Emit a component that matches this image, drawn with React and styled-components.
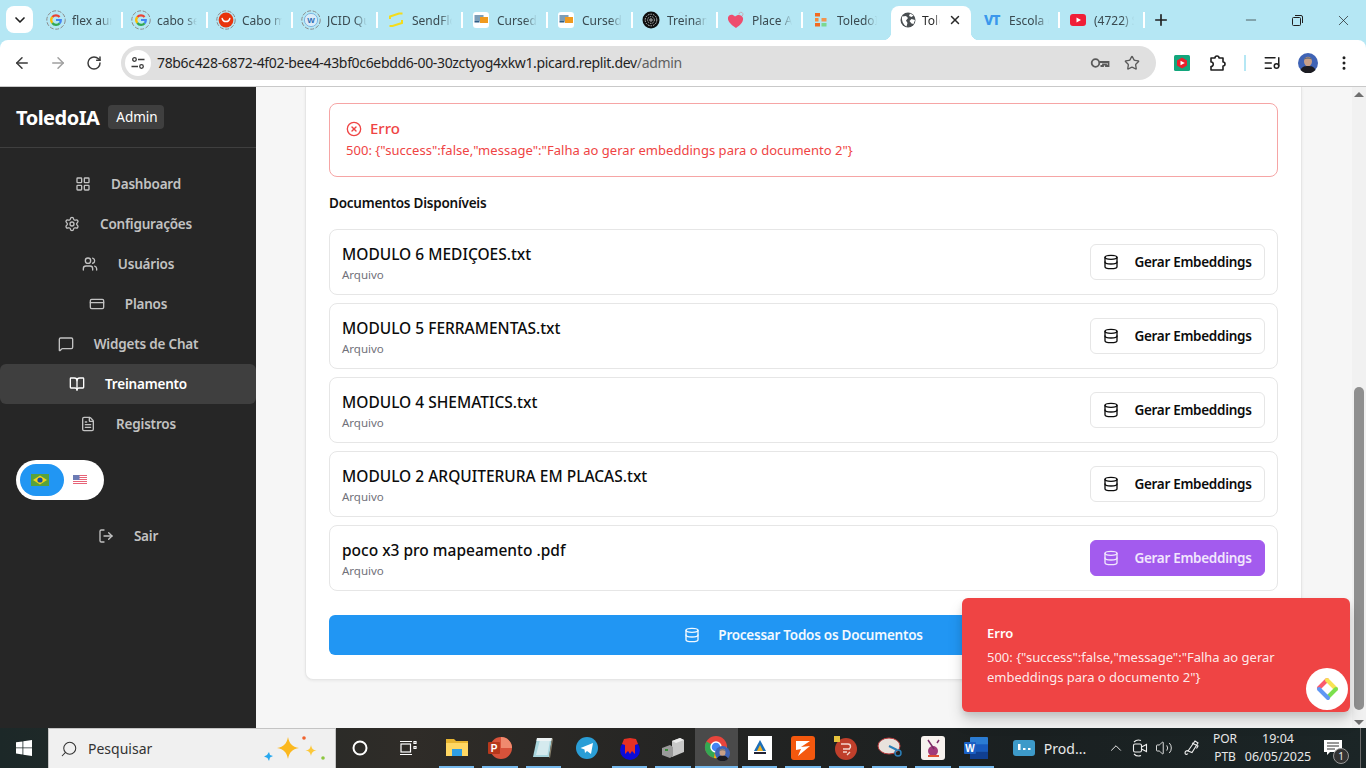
import styled, { createGlobalStyle } from 'styled-components'
import {
  ArrowLeft, ArrowRight, BookOpen, ChevronDown, ChevronUp, CircleX, CreditCard, Database, EllipsisVertical,
  FileText, LayoutGrid, ListMusic, LogOut, MessageSquare, Minus, Plus, RotateCw, Search, Settings, Star,
  Users, Volume2, X
} from 'lucide-react'

const UI_FONT = '"Noto Sans", "Open Sans", sans-serif'

const ERROR_TEXT = '500: {"success":false,"message":"Falha ao gerar embeddings para o documento 2"}'

const GlobalStyle = createGlobalStyle`
  html, body {
    margin: 0;
    height: 100%;
    overflow: hidden;
  }
  #root {
    height: 100vh;
  }
  * {
    box-sizing: border-box;
  }
`

const Screen = styled.div`
  display: flex;
  flex-direction: column;
  height: 768px;
  font-family: ${UI_FONT};
  background: #b5e7f4;
`

/* browser tabs */
const TabStrip = styled.div`
  display: flex;
  align-items: flex-end;
  height: 40px;
  flex: none;
`

const TabMenu = styled.div`
  display: flex;
  align-items: center;
  justify-content: center;
  width: 27px;
  height: 27px;
  margin: 0 5px 7px 6px;
  border-radius: 8px;
  background: #fff;
  color: #1f1f1f;
`

const Tab = styled.div`
  position: relative;
  display: flex;
  align-items: center;
  gap: 6px;
  width: 85px;
  height: 40px;
  padding-left: 8px;
  font-size: 12px;
  color: #3a4a50;

  &::after {
    content: '';
    display: ${p => (p.$nosep ? 'none' : 'block')};
    position: absolute;
    right: 0;
    top: 12px;
    width: 2px;
    height: 16px;
    background: #fff;
  }
`

const ActiveTab = styled.div`
  position: relative;
  display: flex;
  align-items: center;
  gap: 6px;
  width: 80px;
  height: 34px;
  margin: 0 4px 0 3px;
  padding: 0 9px 6px;
  background: #fff;
  border-radius: 8px 8px 0 0;
  font-size: 12px;
  color: #2a2a2a;

  &::before, &::after {
    content: '';
    position: absolute;
    bottom: 0;
    width: 8px;
    height: 8px;
  }
  &::before {
    left: -8px;
    background: radial-gradient(circle at 0 0, transparent 8px, #fff 8.5px);
  }
  &::after {
    right: -8px;
    background: radial-gradient(circle at 100% 0, transparent 8px, #fff 8.5px);
  }
`

const TabClose = styled(X)`
  margin-left: auto;
`

const TabLabel = styled.span`
  width: ${p => p.$width || 40}px;
  overflow: hidden;
  white-space: nowrap;
  -webkit-mask-image: linear-gradient(90deg, #000 70%, transparent);
  mask-image: linear-gradient(90deg, #000 70%, transparent);
`

const NewTab = styled.div`
  display: flex;
  align-items: center;
  justify-content: center;
  width: 28px;
  height: 40px;
  margin-left: 2px;
  color: #1f1f1f;
`

const WindowButtons = styled.div`
  display: flex;
  margin-left: auto;
  height: 40px;
`

const WindowButton = styled.div`
  display: flex;
  align-items: center;
  justify-content: center;
  width: 46px;
  color: #1f1f1f;
`

const VtMark = styled.span`
  width: 20px;
  padding-left: 1px;
  font-size: 14px;
  line-height: 14px;
  font-weight: 800;
  letter-spacing: -1.2px;
  color: #3a97ec;
`

/* address bar */
const Toolbar = styled.div`
  display: flex;
  align-items: flex-start;
  flex: none;
  height: 47px;
  padding: 6px 4px 0;
  background: #fff;
  border-radius: 8px 8px 0 0;
  border-bottom: 1px solid #c9c9c9;
`

const ToolButton = styled.div`
  display: flex;
  align-items: center;
  justify-content: center;
  flex: none;
  width: 36px;
  height: 34px;
  color: ${p => (p.$muted ? '#a0a0a0' : '#3b3b3b')};
`

const Omnibox = styled.div`
  display: flex;
  align-items: center;
  flex: 1;
  height: 34px;
  margin: 0 8px 0 9px;
  padding: 0 16px 0 4px;
  border-radius: 17px;
  background: #e0e0e0;
`

const SiteChip = styled.div`
  display: flex;
  align-items: center;
  justify-content: center;
  width: 26px;
  height: 26px;
  border-radius: 50%;
  background: #fff;
`

const Url = styled.div`
  flex: 1;
  margin-left: 6px;
  padding-bottom: 1px;
  font-size: 14px;
  letter-spacing: -0.34px;
  color: #1f1f1f;
  white-space: nowrap;

  span {
    color: #5f5f5f;
  }
`

const OmniIcons = styled.div`
  display: flex;
  align-items: center;
  gap: 14px;
  color: #5a5a5a;
`

const ToolDivider = styled.div`
  flex: none;
  width: 2px;
  height: 16px;
  margin: 9px 8px 0;
  background: #b5e7f4;
`

/* page area */
const Viewport = styled.div`
  position: relative;
  display: flex;
  flex: 1;
  min-height: 0;
  background: #f6f6f6;
`

const Sidebar = styled.aside`
  flex: none;
  width: 256px;
  background: #262626;
`

const SidebarHeader = styled.div`
  display: flex;
  align-items: center;
  gap: 9px;
  height: 61px;
  padding: 0 16px;
  border-bottom: 1px solid #3f3f3f;
`

const Brand = styled.div`
  font-size: 20px;
  font-weight: 700;
  letter-spacing: -0.5px;
  color: #fff;
`

const Badge = styled.div`
  display: flex;
  align-items: center;
  height: 24px;
  padding: 0 6px 0 8px;
  border-radius: 4px;
  background: #3f3f3f;
  font-size: 13.5px;
  color: #fff;
`

const Nav = styled.nav`
  display: flex;
  flex-direction: column;
  padding-top: 16px;
`

const NavItem = styled.div`
  display: flex;
  align-items: center;
  justify-content: center;
  gap: 20px;
  height: 40px;
  border-radius: 6px;
  font-size: 13.5px;
  font-weight: 600;
  letter-spacing: -0.2px;
  color: ${p => (p.$active ? '#fff' : '#c2c2c2')};
  background: ${p => (p.$active ? '#3f3f3f' : 'transparent')};
`

const LangToggle = styled.div`
  display: flex;
  align-items: center;
  width: 88px;
  height: 40px;
  margin: 16px 0 16px 16px;
  padding: 4px;
  border-radius: 20px;
  background: #fff;
`

const LangKnob = styled.div`
  display: flex;
  align-items: center;
  justify-content: center;
  width: 44px;
  height: 32px;
  padding-right: 4px;
  border-radius: 16px;
  background: #2196f3;
`

const LangOff = styled.div`
  display: flex;
  justify-content: center;
  width: 32px;
  opacity: 0.75;
`

const Main = styled.main`
  flex: 1;
  min-width: 0;
  overflow: hidden;
  padding-left: 49px;
`

const Card = styled.section`
  width: 997px;
  padding: 16px 23px 24px;
  background: #fff;
  border: 1px solid #e6e6e6;
  border-top: 0;
  border-radius: 0 0 8px 8px;
  box-shadow: 0 1px 3px rgba(0, 0, 0, 0.06);
`

const Alert = styled.div`
  padding: 14px 16px 16px;
  border: 1px solid #f6a5a5;
  border-radius: 8px;
  color: #ef4444;
`

const AlertTitle = styled.div`
  display: flex;
  align-items: center;
  gap: 8px;
  height: 22px;
  font-size: 15px;
  line-height: 20px;
  font-weight: 500;

  span {
    margin-bottom: 2px;
  }
`

const AlertText = styled.div`
  font-size: 13px;
  line-height: 20px;
  letter-spacing: 0.03px;
`

const SectionTitle = styled.h3`
  margin: 16px 0;
  font-size: 13.5px;
  line-height: 20px;
  font-weight: 600;
  letter-spacing: -0.23px;
  color: #111;
`

const DocList = styled.div`
  display: flex;
  flex-direction: column;
  gap: 8px;
`

const DocRow = styled.div`
  display: flex;
  align-items: center;
  justify-content: space-between;
  padding: 12px 12px 11px;
  border: 1px solid #e6e6e6;
  border-radius: 8px;
`

const DocName = styled.div`
  font-size: 15.5px;
  line-height: 24px;
  font-weight: 500;
  color: #0c0c0c;
`

const DocType = styled.div`
  margin-top: 1px;
  font-size: 11.5px;
  line-height: 16px;
  color: #71717a;
`

const EmbedButton = styled.div`
  display: flex;
  align-items: center;
  justify-content: center;
  gap: 15px;
  width: 175px;
  height: 36px;
  margin-bottom: 1px;
  border: 1px solid ${p => (p.$hover ? '#a35bee' : '#e6e6e6')};
  border-radius: 6px;
  background: ${p => (p.$hover ? '#a35bee' : '#fff')};
  color: ${p => (p.$hover ? '#f1e6fd' : '#0c0c0c')};
  font-size: 13.5px;
  font-weight: 600;
  letter-spacing: -0.3px;
`

const ProcessButton = styled.div`
  display: flex;
  align-items: center;
  justify-content: center;
  gap: 18px;
  height: 40px;
  margin-top: 24px;
  border-radius: 6px;
  background: #2196f3;
  color: #f2f9ff;
  font-size: 13.5px;
  font-weight: 600;
  letter-spacing: -0.25px;
`

/* scrollbar */
const ScrollTrack = styled.div`
  display: flex;
  flex-direction: column;
  align-items: center;
  flex: none;
  width: 14px;
  background: #f1f1f1;
`

const ScrollArrow = styled.div`
  flex: none;
  width: 0;
  height: 0;
  margin-top: 5px;
  border-left: 5px solid transparent;
  border-right: 5px solid transparent;
  ${p => (p.$down ? 'border-top: 5px solid #6f6f6f;' : 'border-bottom: 5px solid #6f6f6f;')}
`

const ScrollThumb = styled.div`
  flex: none;
  width: 10px;
  height: 323px;
  margin-top: 290px;
  margin-bottom: 5px;
  border-radius: 5px;
  background: #8f8f8f;
`

/* overlays */
const Toast = styled.div`
  position: absolute;
  right: 16px;
  bottom: 16px;
  width: 388px;
  height: 114px;
  padding: 25px;
  border-radius: 6px;
  background: #ef4444;
  color: #fff;
  box-shadow: 0 10px 15px rgba(0, 0, 0, 0.14), 0 4px 6px rgba(0, 0, 0, 0.1);
`

const ToastTitle = styled.div`
  font-size: 13px;
  line-height: 20px;
  font-weight: 600;
`

const ToastText = styled.div`
  margin-top: 4px;
  font-size: 13px;
  line-height: 20px;
  color: rgba(255, 255, 255, 0.9);
`

const HelpBubble = styled.div`
  position: absolute;
  right: 18px;
  bottom: 18px;
  display: flex;
  align-items: center;
  justify-content: center;
  width: 42px;
  height: 42px;
  border-radius: 50%;
  background: #fff;
`

/* windows taskbar */
const Taskbar = styled.footer`
  display: flex;
  align-items: stretch;
  flex: none;
  height: 40px;
  background: linear-gradient(90deg, #1c2828, #2f2c28 30%, #222322 55%, #1a2021 75%, #1b2526);
  color: #f0f0f0;
`

const StartButton = styled.div`
  display: flex;
  align-items: center;
  justify-content: center;
  width: 48px;
`

const SearchBox = styled.div`
  display: flex;
  align-items: center;
  width: 288px;
  padding: 0 9px 0 11px;
  background: #f0f0f0;
  border: 1px solid #c4c4c4;
  border-bottom: 0;
  color: #333;
  font-size: 14px;
`

const SearchGlass = styled(Search)`
  transform: scaleX(-1);
`

const SearchText = styled.span`
  flex: 1;
  margin-left: 10px;
`

const TaskButton = styled.div`
  display: flex;
  align-items: center;
  justify-content: center;
  width: ${p => p.$width}px;
`

const TaskApps = styled.div`
  display: flex;
  margin-left: 3px;
`

const TaskApp = styled.div`
  position: relative;
  display: flex;
  align-items: center;
  justify-content: center;
  width: 43.3px;
  background: ${p => (p.$active ? '#4a4a4a' : 'transparent')};

  &::after {
    content: '';
    display: ${p => (p.$open ? 'block' : 'none')};
    position: absolute;
    left: ${p => (p.$active ? 0 : 4)}px;
    right: ${p => (p.$active ? 0 : 4)}px;
    bottom: 0;
    height: 2px;
    background: #76b9ed;
  }
`

const TaskLabelled = styled.div`
  display: flex;
  align-items: center;
  gap: 9px;
  width: 106px;
  padding-left: 15px;
  font-size: 14px;
  color: #e8e8e8;
`

const Tray = styled.div`
  display: flex;
  align-items: stretch;
  margin-left: auto;
`

const TrayIcon = styled.div`
  display: flex;
  align-items: center;
  justify-content: center;
  width: ${p => p.$width || 24}px;
`

const TrayText = styled.div`
  display: flex;
  flex-direction: column;
  align-items: center;
  justify-content: center;
  width: ${p => p.$width}px;
  font-size: ${p => p.$size || 12}px;
  line-height: 18px;
  color: #e8e8e8;
  white-space: nowrap;
`

const NotifyButton = styled.div`
  position: relative;
  display: flex;
  align-items: center;
  justify-content: center;
  width: 38px;
`

const NotifyCount = styled.span`
  position: absolute;
  right: 3px;
  bottom: 4px;
  display: flex;
  align-items: center;
  justify-content: center;
  width: 16px;
  height: 16px;
  border-radius: 50%;
  background: #333;
  border: 1px solid #999;
  font-size: 10px;
  color: #eee;
`

const ShowDesktop = styled.div`
  width: 14px;
  background: linear-gradient(90deg, transparent 8px, #6a6a6a 8px, #6a6a6a 9px, transparent 9px);
`

const SparkleSvg = styled.svg`
  margin-top: 4px;
`

const Ring = () => <circle cx="10" cy="10" r="9.2" fill="none" stroke="#8b8b8b" strokeWidth="1" strokeDasharray="4 1.6" />

const GoogleIcon = () => (
  <svg width="20" height="20" viewBox="0 0 20 20">
    <Ring />
    <g fill="none" strokeWidth="2.2">
      <path d="M13.6 7A4.8 4.8 0 0 0 6.3 7" stroke="#ea4335" />
      <path d="M6.3 7a4.8 4.8 0 0 0 0 6" stroke="#fbbc05" />
      <path d="M6.3 13a4.8 4.8 0 0 0 7.4.3" stroke="#34a853" />
      <path d="M13.7 13.3A4.8 4.8 0 0 0 14.8 10H10" stroke="#4285f4" />
    </g>
  </svg>
)

const AliIcon = () => (
  <svg width="20" height="20" viewBox="0 0 20 20">
    <Ring />
    <circle cx="10" cy="10" r="7.4" fill="#e8340c" />
    <path d="M6.2 8.6a3.9 3.9 0 0 0 7.6 0" fill="none" stroke="#fff" strokeWidth="1.5" strokeLinecap="round" />
  </svg>
)

const JcidIcon = () => (
  <svg width="20" height="20" viewBox="0 0 20 20">
    <Ring />
    <circle cx="10" cy="10" r="6.6" fill="#dcecf8" stroke="#6aa8dc" strokeWidth="0.8" />
    <text x="10" y="12.8" textAnchor="middle" fontSize="8" fontWeight="700" fill="#2d6fb8" fontFamily="Liberation Sans, sans-serif">W</text>
  </svg>
)

const SendIcon = () => (
  <svg width="20" height="20" viewBox="0 0 20 20" fill="none" stroke="#f4dc1c" strokeWidth="2">
    <path d="M4 9V6.5L13 3.5h3.5" />
    <path d="M16 10v3l-9.5 3H3.5" />
  </svg>
)

const CursedIcon = () => (
  <svg width="20" height="20" viewBox="0 0 20 20">
    <rect x="2" y="2" width="16" height="16" rx="3" fill="#fff" />
    <rect x="3.5" y="5" width="9" height="6" fill="#7d9eb8" />
    <rect x="9" y="7" width="8" height="6" fill="#f09a1e" />
    <rect x="3.5" y="11" width="5" height="1.5" fill="#2d5d86" />
  </svg>
)

const TrainIcon = () => (
  <svg width="20" height="20" viewBox="0 0 20 20">
    <circle cx="10" cy="10" r="8.5" fill="#0e0e0e" />
    <g fill="none" stroke="#cfcfcf" strokeWidth="0.9">
      <circle cx="10" cy="10" r="5.8" strokeDasharray="1.6 1" />
      <circle cx="10" cy="10" r="3.4" strokeDasharray="1.4 1" />
      <circle cx="10" cy="10" r="1.2" />
    </g>
  </svg>
)

const HeartIcon = () => (
  <svg width="20" height="20" viewBox="0 0 20 20">
    <path d="M10 18C4 14 1.5 11 2 7.5 2.5 4.5 6.5 3.5 9 6.5c2.5-2.5 7-2 8 1.5.7 3.5-2.5 7-7 10z" fill="#ee4d6e" />
    <path d="M13 4.5a2 2 0 1 1 3 1.5" fill="none" stroke="#c9a3ad" strokeWidth="0.9" />
  </svg>
)

const ToledoIcon = () => (
  <svg width="20" height="20" viewBox="0 0 20 20">
    <rect x="4" y="3" width="5" height="3.5" fill="#f26a21" />
    <rect x="4" y="8" width="3.5" height="3.5" fill="#f58a3c" />
    <rect x="4" y="13" width="5" height="3.5" fill="#f26a21" />
    <rect x="10.5" y="8" width="5" height="3.5" fill="#f2944e" />
    <rect x="10.5" y="13" width="5" height="3.5" fill="#7bd88f" />
  </svg>
)

const GlobeIcon = () => (
  <svg width="16" height="16" viewBox="0 0 16 16">
    <circle cx="8" cy="8" r="7.5" fill="#4a4f52" />
    <path d="M2 4.5 6 4l2 2-2 2.5 1.5 2.5-1 3.5C3.5 13 1.5 9 2 4.5zM10 1.5l3.5 2-2 1.5-2.5-1zM15 8l-3.5-1-2 2 2 2.5L13.5 12z" fill="#fff" />
  </svg>
)

const YoutubeIcon = () => (
  <svg width="20" height="20" viewBox="0 0 20 20">
    <rect x="2" y="4" width="16" height="12" rx="3" fill="#f01f37" />
    <path d="M8.5 7.5 13 10l-4.5 2.5z" fill="#fff" />
  </svg>
)

const TuneIcon = () => (
  <svg width="16" height="16" viewBox="0 0 16 16" fill="none" stroke="#3b3b3b" strokeWidth="1.3">
    <circle cx="4.5" cy="4.5" r="1.8" />
    <path d="M8 4.5h6.5M1.5 11.5H8" />
    <circle cx="11.5" cy="11.5" r="1.8" />
  </svg>
)

const KeyIcon = () => (
  <svg width="20" height="14" viewBox="0 0 20 14" fill="none" stroke="#5a5a5a" strokeWidth="1.8">
    <circle cx="5.5" cy="7" r="3.8" />
    <path d="M9.5 6H18.5V10H16V8.5H13V10H10.5" />
  </svg>
)

const RestoreIcon = () => (
  <svg width="11" height="11" viewBox="0 0 11 11" fill="none" stroke="#1f1f1f">
    <rect x="0.5" y="2.5" width="8" height="8" rx="1" />
    <path d="M3 .5h6a1.5 1.5 0 0 1 1.5 1.5v6" />
  </svg>
)

const ExtensionBadge = () => (
  <svg width="16" height="16" viewBox="0 0 16 16">
    <rect width="16" height="16" rx="1.5" fill="#12a67c" />
    <path d="M8 2.5 13 5.5v5L8 13.5 3 10.5v-5z" fill="#ea1f2d" />
    <path d="M6.5 5.8 10.8 8l-4.3 2.2z" fill="#fff" />
  </svg>
)

const PuzzleIcon = () => (
  <svg width="18" height="18" viewBox="0 0 18 18" fill="none" stroke="#1f1f1f" strokeWidth="1.6" strokeLinejoin="round">
    <path d="M2 4h4a2 2 0 0 1 4 0h4v4a2 2 0 0 1 0 4v4H2v-3.5a2 2 0 0 0 0-4.5z" />
  </svg>
)

const AvatarIcon = ({ size = 20 }) => (
  <svg width={size} height={size} viewBox="0 0 20 20">
    <circle cx="10" cy="10" r="10" fill="#3f63b5" />
    <ellipse cx="10" cy="8.5" rx="4" ry="4.8" fill="#c89f86" />
    <path d="M6 6.5C6.5 3.5 13.5 3.5 14 6.5c-2-1-6-1-8 0z" fill="#6a6a70" />
    <path d="M2.5 17c1.5-3.5 4-4 7.5-4s6 .5 7.5 4A10 10 0 0 1 2.5 17z" fill="#1c1c22" />
  </svg>
)

const BrazilFlag = () => (
  <svg width="18" height="12" viewBox="0 0 18 12">
    <rect width="18" height="12" fill="#58a23c" />
    <path d="M9 1.5 16 6l-7 4.5L2 6z" fill="#f2d51c" />
    <circle cx="9" cy="6" r="2.6" fill="#1d4f9e" />
  </svg>
)

const UsFlag = () => (
  <svg width="14" height="10" viewBox="0 0 14 10">
    <rect width="14" height="10" fill="#fff" />
    <path d="M0 .5h14M0 2.5h14M0 4.5h14M0 6.5h14M0 8.5h14" stroke="#e0304a" />
    <rect width="6.5" height="5" fill="#3c4f9c" />
  </svg>
)

const ReplitMark = () => (
  <svg width="24" height="24" viewBox="0 0 24 24" fill="none" strokeWidth="4" strokeLinecap="round">
    <path d="M12 3 4 11" stroke="#fb5b6c" />
    <path d="M12 3l9 9" stroke="#f7e353" />
    <path d="M21 12l-8 8" stroke="#7be04d" />
    <path d="M13 21l-9-9" stroke="#5f97f4" />
  </svg>
)

const WindowsLogo = () => (
  <svg width="16" height="16" viewBox="0 0 16 16" fill="#fff">
    <path d="M0 2.3 6.5 1.4v6.100H0zM7.3 1.3 16 0v7.500H7.3zM0 8.3h6.500v6.200L0 13.600zM7.3 8.3H16V16l-8.700-1.200z" />
  </svg>
)

const SparkleGroup = () => (
  <SparkleSvg width="62" height="32" viewBox="0 0 62 32">
    <path d="M24 2c1.5 7 4 9.5 11 11-7 1.5-9.5 4-11 11-1.5-7-4-9.5-11-11 7-1.5 9.5-4 11-11z" fill="#fbb81f" />
    <path d="M47 10c.7 3.5 2 5 5.5 5.5C49 16 47.7 17.5 47 21c-.7-3.5-2-5-5.5-5.5 3.5-.5 4.8-2 5.5-5.5z" fill="#fcc83a" />
    <path d="M5 17l1 3 3 1-3 1.500-1 3.500-1.500-3L0 21.500 3 20z" fill="#27a8ef" />
    <circle cx="40" cy="3" r="1.8" fill="#f0622e" />
    <circle cx="59" cy="23" r="1.8" fill="#8cc63f" />
  </SparkleSvg>
)

const CortanaIcon = () => (
  <svg width="16" height="16" viewBox="0 0 16 16">
    <circle cx="8" cy="8" r="6.5" fill="none" stroke="#fff" strokeWidth="2" />
  </svg>
)

const TaskViewIcon = () => (
  <svg width="18" height="18" viewBox="0 0 18 18" fill="none" stroke="#fff" strokeWidth="1.2">
    <rect x="2" y="5" width="9.5" height="8" />
    <path d="M1 2.5h12M1 15.5h12M15 2.5h2v2h-2zM15 7.5h2v2h-2z" />
  </svg>
)

const ExplorerIcon = () => (
  <svg width="22" height="20" viewBox="0 0 22 20">
    <path d="M0 1h8l2 2h12v14H0z" fill="#e7b431" />
    <rect y="5" width="22" height="13" fill="#ffd763" />
    <rect x="6" y="11" width="10" height="7" fill="#2f9ee3" />
  </svg>
)

const PptIcon = () => (
  <svg width="24" height="24" viewBox="0 0 24 24">
    <circle cx="13" cy="12" r="11" fill="#d8523a" />
    <path d="M13 12V1a11 11 0 0 1 11 11z" fill="#f08a6e" />
    <rect x="0" y="6" width="12" height="12" rx="1" fill="#b7381c" />
    <text x="6" y="15.5" textAnchor="middle" fontSize="10" fontWeight="700" fill="#fff" fontFamily="Liberation Sans, sans-serif">P</text>
  </svg>
)

const NotesIcon = () => (
  <svg width="22" height="24" viewBox="0 0 22 24">
    <path d="M5 2h15l-3 19H1z" fill="#a9d6de" />
    <path d="M8 4h10l-2.5 15H4z" fill="#d5eaee" />
    <path d="M5 2h15l-.5 3H4.5z" fill="#eef3f4" />
    <path d="M17 21l3-19 1 1-3 19z" fill="#8b8470" />
  </svg>
)

const TelegramIcon = () => (
  <svg width="22" height="22" viewBox="0 0 22 22">
    <circle cx="11" cy="11" r="11" fill="#2a9ed6" />
    <path d="M4.5 11 17 6l-2 11-4-3-2 2-.5-3.5z" fill="#fff" />
  </svg>
)

const RedBlueIcon = () => (
  <svg width="22" height="24" viewBox="0 0 22 24">
    <circle cx="11" cy="14" r="10" fill="#0b0bd8" />
    <path d="M5 3l6-1 6 1 2 5-3 1v9l-3-3-2 3-2-3-3 3V9L3 8z" fill="#e53124" />
  </svg>
)

const GrayAppIcon = () => (
  <svg width="24" height="22" viewBox="0 0 24 22">
    <path d="M11 4l8-3 4 2v12l-12 5z" fill="#c8c8c8" />
    <path d="M19 1l4 2-8 3-4-2z" fill="#ececec" />
    <path d="M1 11l8-3 3 2v9l-3 2-8-3z" fill="#9a9a9a" />
    <rect x="4" y="12" width="3" height="2" fill="#3a8d3a" />
  </svg>
)

const ChromeIcon = () => (
  <svg width="28" height="26" viewBox="-2 0 28 26">
    <circle cx="12" cy="12" r="11" fill="#e8453c" />
    <path d="M12 12 2.5 6.5A11 11 0 0 0 10 23z" fill="#34a853" />
    <path d="M12 12 23 12A11 11 0 0 1 10 23z" fill="#fbbc05" />
    <circle cx="12" cy="12" r="5" fill="#4285f4" stroke="#fff" strokeWidth="1.5" />
    <g transform="translate(11 11)"><AvatarIcon size={15} /></g>
  </svg>
)

const WhiteTileIcon = () => (
  <svg width="24" height="24" viewBox="0 0 24 24">
    <rect width="24" height="24" fill="#fff" />
    <path d="M12 4l6 11H6z" fill="#1d6fb8" />
    <path d="M12 9l3 6H9z" fill="#f2b01e" />
    <rect x="6" y="16" width="12" height="2" fill="#223" />
  </svg>
)

const OrangeTileIcon = () => (
  <svg width="24" height="24" viewBox="0 0 24 24">
    <rect width="24" height="24" rx="3" fill="#f4580e" />
    <path d="M5 5h14l-9 6 9-1-12 10 3-7-5 1z" fill="#fff" />
  </svg>
)

const RedRoundIcon = () => (
  <svg width="24" height="24" viewBox="0 0 24 24">
    <circle cx="12" cy="13" r="11" fill="#bf3f2b" />
    <path d="M7 8h7a2.5 2.5 0 0 1 0 5H9h7M9 16h4M13 19l3-3" fill="none" stroke="#f3d8cf" strokeWidth="1.4" />
    <rect x="0" y="0" width="6" height="6" fill="#e8c33c" />
  </svg>
)

const ScissorsIcon = () => (
  <svg width="26" height="24" viewBox="0 0 26 24">
    <ellipse cx="12" cy="10" rx="11" ry="8" fill="#e8e2dc" stroke="#b8383a" />
    <path d="M12 10l8 4" stroke="#2b7fb8" strokeWidth="2" />
    <circle cx="21" cy="17" r="3" fill="none" stroke="#2b7fb8" strokeWidth="1.5" />
  </svg>
)

const MagentaTileIcon = () => (
  <svg width="24" height="24" viewBox="0 0 24 24">
    <rect width="24" height="24" rx="3" fill="#f7f2ee" />
    <circle cx="12" cy="15" r="5" fill="#a13a7a" />
    <path d="M7 4l6 9M18 4l-2 3" stroke="#7a2b66" strokeWidth="1.5" />
    <path d="M7 20h11" stroke="#e04f33" strokeWidth="2" />
  </svg>
)

const WordIcon = () => (
  <svg width="24" height="22" viewBox="0 0 24 22">
    <rect x="6" width="18" height="22" rx="1" fill="#2b7cd3" />
    <rect x="6" y="7.3" width="18" height="7.3" fill="#185abd" />
    <rect x="6" y="14.6" width="18" height="7.4" fill="#103f91" />
    <rect y="5" width="12" height="12" rx="1" fill="#1a5fc4" />
    <text x="6" y="14.5" textAnchor="middle" fontSize="10" fontWeight="700" fill="#fff" fontFamily="Liberation Sans, sans-serif">W</text>
  </svg>
)

const ProdIcon = () => (
  <svg width="22" height="18" viewBox="0 0 22 18">
    <rect width="22" height="16" y="1" rx="3" fill="#3d9ac9" />
    <rect x="5" y="5" width="2.5" height="6" fill="#fff" />
    <rect x="10" y="9" width="2.5" height="2" fill="#fff" />
    <rect x="15" y="9" width="2.5" height="2" fill="#fff" />
  </svg>
)

const MeetIcon = () => (
  <svg width="16" height="18" viewBox="0 0 16 18" fill="none" stroke="#eee" strokeWidth="1.1">
    <rect x="1.5" y="5" width="8" height="8" rx="1.5" />
    <path d="M9.5 8 14.5 5.5v7L9.5 10M2 3a6.5 6.5 0 0 1 7-1.5M2 15a6.5 6.5 0 0 0 7 1.5" />
  </svg>
)

const PenIcon = () => (
  <svg width="18" height="18" viewBox="0 0 18 18" fill="none" stroke="#eee" strokeWidth="1.1">
    <path d="M5 12 12 2l3 2-6 9.5zM9 4l6 3-1.5 2.500" />
    <path d="M5 12c-1-1-3 .5-3 2s2 2 3 .5" />
  </svg>
)

const NotifyIcon = () => (
  <svg width="18" height="16" viewBox="0 0 18 16">
    <path d="M0 0h18v12H6l-3 3v-3H0z" fill="#fff" />
    <path d="M3 3h12M3 6h12M3 9h8" stroke="#333" />
  </svg>
)

const TABS_LEFT = [
  { id: 1, icon: <GoogleIcon />, label: 'flex aura' },
  { id: 2, icon: <GoogleIcon />, label: 'cabo sem' },
  { id: 3, icon: <AliIcon />, label: 'Cabo ma' },
  { id: 4, icon: <JcidIcon />, label: 'JCID Qua' },
  { id: 5, icon: <SendIcon />, label: 'SendFlow' },
  { id: 6, icon: <CursedIcon />, label: 'Cursed' },
  { id: 7, icon: <CursedIcon />, label: 'Cursed' },
  { id: 8, icon: <TrainIcon />, label: 'Treinam' },
  { id: 9, icon: <HeartIcon />, label: 'Place A' },
  { id: 10, icon: <ToledoIcon />, label: 'ToledoIA', nosep: true }
]

const NAV = [
  { icon: LayoutGrid, label: 'Dashboard' },
  { icon: Settings, label: 'Configurações' },
  { icon: Users, label: 'Usuários' },
  { icon: CreditCard, label: 'Planos' },
  { icon: MessageSquare, label: 'Widgets de Chat' },
  { icon: BookOpen, label: 'Treinamento', active: true },
  { icon: FileText, label: 'Registros' }
]

const DOCS = [
  { name: 'MODULO 6 MEDIÇOES.txt' },
  { name: 'MODULO 5 FERRAMENTAS.txt' },
  { name: 'MODULO 4 SHEMATICS.txt' },
  { name: 'MODULO 2 ARQUITERURA EM PLACAS.txt' },
  { name: 'poco x3 pro mapeamento .pdf', hover: true }
]

const TASK_APPS = [
  { icon: <ExplorerIcon />, open: true },
  { icon: <PptIcon />, open: true },
  { icon: <NotesIcon />, open: true },
  { icon: <TelegramIcon /> },
  { icon: <RedBlueIcon />, open: true },
  { icon: <GrayAppIcon />, open: true },
  { icon: <ChromeIcon />, open: true, active: true },
  { icon: <WhiteTileIcon />, open: true },
  { icon: <OrangeTileIcon />, open: true },
  { icon: <RedRoundIcon />, open: true },
  { icon: <ScissorsIcon />, open: true },
  { icon: <MagentaTileIcon />, open: true },
  { icon: <WordIcon />, open: true }
]

export default function App() {
  return (
    <Screen>
      <GlobalStyle />
      <TabStrip>
        <TabMenu><ChevronDown size={16} strokeWidth={2.5} /></TabMenu>
        {TABS_LEFT.map(tab => (
          <Tab key={tab.id} $nosep={tab.nosep}>
            {tab.icon}
            <TabLabel>{tab.label}</TabLabel>
          </Tab>
        ))}
        <ActiveTab>
          <GlobeIcon />
          <TabLabel $width={18}>ToledoIA</TabLabel>
          <TabClose size={14} strokeWidth={2.5} />
        </ActiveTab>
        <Tab>
          <VtMark>VT</VtMark>
          <TabLabel>Escola de</TabLabel>
        </Tab>
        <Tab>
          <YoutubeIcon />
          <TabLabel>(4722) S</TabLabel>
        </Tab>
        <NewTab><Plus size={18} strokeWidth={2.2} /></NewTab>
        <WindowButtons>
          <WindowButton><Minus size={16} strokeWidth={1} /></WindowButton>
          <WindowButton><RestoreIcon /></WindowButton>
          <WindowButton><X size={17} strokeWidth={1} /></WindowButton>
        </WindowButtons>
      </TabStrip>

      <Toolbar>
        <ToolButton><ArrowLeft size={18} /></ToolButton>
        <ToolButton $muted><ArrowRight size={18} /></ToolButton>
        <ToolButton><RotateCw size={16} strokeWidth={2.2} /></ToolButton>
        <Omnibox>
          <SiteChip><TuneIcon /></SiteChip>
          <Url>78b6c428-6872-4f02-bee4-43bf0c6ebdd6-00-30zctyog4xkw1.picard.replit.dev<span>/admin</span></Url>
          <OmniIcons>
            <KeyIcon />
            <Star size={16} />
          </OmniIcons>
        </Omnibox>
        <ToolButton><ExtensionBadge /></ToolButton>
        <ToolButton><PuzzleIcon /></ToolButton>
        <ToolDivider />
        <ToolButton><ListMusic size={18} color="#1f1f1f" /></ToolButton>
        <ToolButton><AvatarIcon /></ToolButton>
        <ToolButton><EllipsisVertical size={18} color="#1f1f1f" /></ToolButton>
      </Toolbar>

      <Viewport>
        <Sidebar>
          <SidebarHeader>
            <Brand>ToledoIA</Brand>
            <Badge>Admin</Badge>
          </SidebarHeader>
          <Nav>
            {NAV.map(item => (
              <NavItem key={item.label} $active={item.active}>
                <item.icon size={16} />
                {item.label}
              </NavItem>
            ))}
            <LangToggle>
              <LangKnob><BrazilFlag /></LangKnob>
              <LangOff><UsFlag /></LangOff>
            </LangToggle>
            <NavItem>
              <LogOut size={16} />
              Sair
            </NavItem>
          </Nav>
        </Sidebar>

        <Main>
          <Card>
            <Alert>
              <AlertTitle><CircleX size={16} /><span>Erro</span></AlertTitle>
              <AlertText>{ERROR_TEXT}</AlertText>
            </Alert>
            <SectionTitle>Documentos Disponíveis</SectionTitle>
            <DocList>
              {DOCS.map(doc => (
                <DocRow key={doc.name}>
                  <div>
                    <DocName>{doc.name}</DocName>
                    <DocType>Arquivo</DocType>
                  </div>
                  <EmbedButton $hover={doc.hover}>
                    <Database size={16} />
                    Gerar Embeddings
                  </EmbedButton>
                </DocRow>
              ))}
            </DocList>
            <ProcessButton>
              <Database size={16} />
              Processar Todos os Documentos
            </ProcessButton>
          </Card>
        </Main>

        <ScrollTrack>
          <ScrollArrow />
          <ScrollThumb />
          <ScrollArrow $down />
        </ScrollTrack>

        <Toast>
          <ToastTitle>Erro</ToastTitle>
          <ToastText>{ERROR_TEXT}</ToastText>
        </Toast>
        <HelpBubble><ReplitMark /></HelpBubble>
      </Viewport>

      <Taskbar>
        <StartButton><WindowsLogo /></StartButton>
        <SearchBox>
          <SearchGlass size={18} strokeWidth={1.4} />
          <SearchText>Pesquisar</SearchText>
          <SparkleGroup />
        </SearchBox>
        <TaskButton $width={48}><CortanaIcon /></TaskButton>
        <TaskButton $width={48}><TaskViewIcon /></TaskButton>
        <TaskApps>
          {TASK_APPS.map((app, i) => (
            <TaskApp key={i} $open={app.open} $active={app.active}>{app.icon}</TaskApp>
          ))}
        </TaskApps>
        <TaskLabelled>
          <ProdIcon />
          Prod...
        </TaskLabelled>
        <Tray>
          <TrayIcon><ChevronUp size={18} strokeWidth={1.3} /></TrayIcon>
          <TrayIcon><MeetIcon /></TrayIcon>
          <TrayIcon><Volume2 size={18} strokeWidth={1.2} /></TrayIcon>
          <TrayIcon $width={32}><PenIcon /></TrayIcon>
          <TrayText $width={34}><span>POR</span><span>PTB</span></TrayText>
          <TrayText $width={72} $size={12.5}><span>19:04</span><span>06/05/2025</span></TrayText>
          <NotifyButton>
            <NotifyIcon />
            <NotifyCount>1</NotifyCount>
          </NotifyButton>
          <ShowDesktop />
        </Tray>
      </Taskbar>
    </Screen>
  )
}
